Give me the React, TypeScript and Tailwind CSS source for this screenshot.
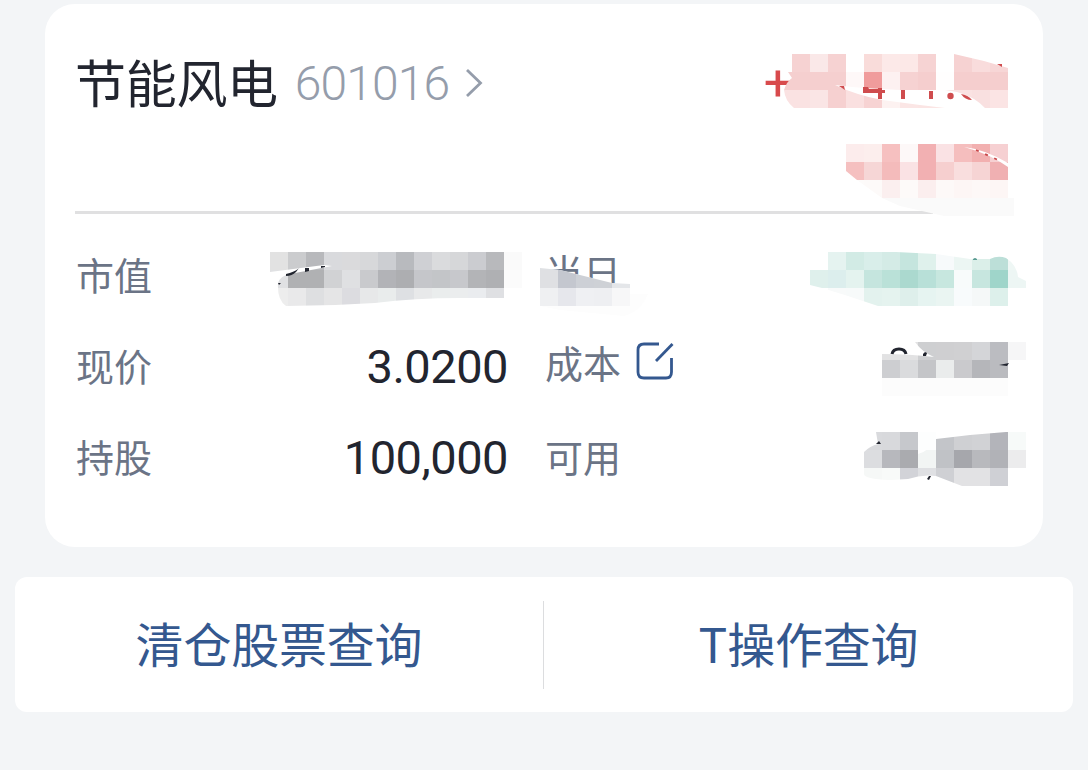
import React from "react";
import clsx from "clsx";

const CELL = 18;

type MosaicProps = {
  id: string;
  x: number;
  y: number;
  clip: string;
  rows: string[];
};

// A block of censored cells, each row is a space separated list of hex colours
const Mosaic = ({ id, x, y, clip, rows }: MosaicProps) => (
  <g>
    <clipPath id={id}>
      <path d={clip} />
    </clipPath>
    <g clipPath={`url(#${id})`} shapeRendering="crispEdges">
      {rows.map((row, r) =>
        row
          .split(" ")
          .map((color, c) =>
            color === "-" ? null : (
              <rect
                key={`${r}-${c}`}
                x={x + c * CELL}
                y={y + r * CELL}
                width={CELL}
                height={CELL}
                fill={`#${color}`}
              />
            )
          )
      )}
    </g>
  </g>
);

const Redactions = () => (
  <svg
    className="pointer-events-none absolute left-0 top-0"
    width="1088"
    height="770"
    viewBox="0 0 1088 770"
    fill="none"
  >
    {/* profit */}
    <Mosaic
      id="profit"
      x={774}
      y={54}
      clip="M792 54H954L984 61L1008 68V108H794Q785 101 784 90Q787 81 792 78L788 72H792Z"
      rows={[
        "- f6d2d2 fae8e8 f6d2d2 ffffff f9dcda fce9e8 fce8e7 f6d3d3 ffffff f6d2d2 f9dcdc f7d6d6",
        "f5cfcf f5cfcf f5cfcf f5cfcf fef8f8 f09c9c fdf1f1 f6d2d2 f5cece fffefe f5cece f5cece f5cece",
        "fae2e2 fae2e2 fae5e5 f6d0d0 fae0e0 f7d3d3 fdf2f1 fbe6e5 fbe5e4 fbe6e5 fae2e2 f9e0e0 fbe4e4",
      ]}
    />
    <path
      d="M835 85Q850 87 864 88L900 90H945L957 92Q975 97 985 108H945L920 105L882 100Q856 95 835 85Z"
      fill="#fff"
    />
    <g fill="#cf4c4e">
      <path d="M839 86h5l1 4Z" />
      <path d="M863 87h5l1 2h9v-1h4v2h3v3h-3v6h-4v-6h-15Z" />
      <path d="M901 90h4v9h-4Z" />
      <path d="M929 91h4v8h-4Z" />
      <circle cx="950.5" cy="96" r="3.2" />
      <path d="M961 94Q968 95 972 100Q965 100 961 94Z" />
      <path d="M997 64h5v3Z" />
    </g>

    {/* profit rate */}
    <Mosaic
      id="rate"
      x={846}
      y={144}
      clip="M846 144H1008V198H882L857 180L846 171Z"
      rows={[
        "fcecec fceeed f6c0c0 fdf8f8 f2b0b2 fae2e4 f5bebe f2b0b0 f6d0d2",
        "f5c0c0 f6d6d6 f4bbbb fae2e4 f2b0b2 f6cfcf f9dede f6d4d4 f0b0b2",
        "fdfbfa fdfaf9 fbefef fdfaf9 fbeeee fdf9f8 fdf6f5 fdf8f7 fdf6f5",
      ]}
    />
    <path d="M932 198H1014V216H944L900 206L882 198Z" fill="#fafafa" />
    <path d="M964 147Q984 149 1008 163V167Q990 154 964 147Z" fill="#fff" />
    <path
      d="M976 150L998 160"
      stroke="#c9484b"
      strokeWidth="1.8"
      strokeDasharray="3 7"
    />

    {/* market value */}
    <Mosaic
      id="market"
      x={270}
      y={252}
      clip="M270 252H522V298H460Q415 298 375 303Q330 306 286 306Q277 300 278 283Q280 276 290 274L332 266L324 265L270 272Z"
      rows={[
        "e2e2e2 cbccce b8b9bc d9dadd dadadc d7d8da ccced2 b8babe cfd0d4 dadbdd d6d7d9 cbccd0 b8b9bc fafafa",
        "e0e1e3 b0b1b3 b0b1b3 d1d2d4 dfe0e2 c9cacd b2b3b7 adaeb1 c5c6ca c3c5c8 c7c8cc b3b4b7 afb0b3 fbfbfb",
        "ededed e9e9ea dedfe1 e5e5e6 dcdce0 e7e8e9 e9ecec dee0e3 e8e9ea eaeded ebedee eaecef dfe0e3 ffffff",
      ]}
    />
    <g fill="#22252f">
      <path d="M286 274Q294 272 298 269L299 268L296 272Q292 276 286 276Z" />
      <path d="M305 268h4v3l-4 1Z" />
      <path d="M321 266h4v1l-4 1Z" />
      <path d="M278 283h3l-2 2Z" />
    </g>

    {/* today */}
    <path d="M540 268L560 270L612 283L630 284V306H540Z" fill="#fff" />
    <Mosaic
      id="today"
      x={540}
      y={252}
      clip="M540 268L560 270L612 283L630 284V306H540Z"
      rows={[
        "dfe1e4 d6d8dc - - -",
        "dfe0e3 c4c7cf cdd0d6 ced1d6 e4e6e9",
        "eff0f2 e6e7ec eff0f3 eeeff2 f7f7f8",
      ]}
    />
    <path d="M540 306H630V294H648Q640 312 624 316L560 310Z" fill="#fdfdfd" />

    {/* today profit */}
    <Mosaic
      id="todayProfit"
      x={810}
      y={252}
      clip="M828 252H896L936 254L970 259H990Q998 255 1006 258Q1017 265 1018 277L1026 281V288H1008V306H878L848 296L822 288L810 285V270H828Z"
      rows={[
        "- e5f3f0 d2ebe5 d9eeea d4ebe6 c5e5de dff1ec f7fafb ecf6f3 dbefe9 bcdfd8 eff7f5",
        "dff0ec dceeed e4f3ef c5e5de bae1d8 abd9cf b8e0d8 c7e7df f8fbfb c7e6df 9fd5ca edf6f4",
        "ffffff f8fafa f7fafa e3f2ee e5f3ef deefeb e6f4f1 eaf5f2 f8fbfc f5f8f8 ddf0eb ffffff",
      ]}
    />
    <path d="M973 259.5Q975 257.5 977 259.5Z" fill="#5b9c93" stroke="#5b9c93" />

    {/* cost price */}
    <Mosaic
      id="cost"
      x={882}
      y={342}
      clip="M915 342H1026V360H1008V378H882V354Q910 354 934 357Q922 352 915 342Z"
      rows={[
        "e2e2e3 e2e2e3 cecfd1 cfcfd1 d0d0d2 d4d5d8 bbbcc1 f6f6f7",
        "cdced1 dadbdd c4c5c8 eaecec cacacd b5b6ba babbbf fefefe",
      ]}
    />
    <path d="M892 354Q893 349 899 349Q905 349 906 354" stroke="#22252f" strokeWidth="3" />
    <path d="M923 354L925 352L927 353L926 356H923Z" fill="#22252f" />
    <path d="M999 365L1009 363L1007 366Z" fill="#22252f" />
    <path d="M882 378H1008V396H882Z" fill="#fcfcfc" />

    {/* available */}
    <Mosaic
      id="available"
      x={864}
      y={432}
      clip="M876 432H918V454Q928 452 936 439L970 435L1006 432H1026V468H1008V486H962L936 476Q922 474 908 479L890 480Q864 479 864 474V452Q870 446 878 444Z"
      rows={[
        "d9dadd d8d9dc c6c8cc fafbfb c3c5c9 cfd0d3 d1d2d5 b3b4ba f7faf9",
        "dcdde0 b7b8bd aaabaf f2f5f4 c0c2c6 a6a7ac b8b9bd b1b2b7 ececed",
        "f6f8f7 f8faf9 d2d3d8 dfe0e3 cfd0d4 e2e2e4 e2e2e4 cfd0d5 ffffff",
      ]}
    />
    <path d="M918 432H936V450H918Z" fill="#fdfefe" />
    <path d="M876 444L879 441L881 444Z" fill="#22252f" />
    <path d="M927 479L929 476H931L929 480Z" fill="#22252f" />
  </svg>
);

const EditIcon = () => (
  <svg width="38" height="38" viewBox="0 0 38 38" fill="none" stroke="#34588f" strokeWidth="2.8">
    <path d="M23 2H8Q2 2 2 8V30Q2 36 8 36H30Q35.5 36 35.5 30V16" />
    <path d="M20 19L36.5 2" />
  </svg>
);

type FieldProps = {
  label: string;
  value?: string;
  raised?: boolean;
  children?: React.ReactNode;
};

const Field = ({ label, value, raised, children }: FieldProps) => (
  <div className={clsx("flex items-center", raised && "pb-[7px]")}>
    <span className="text-[38px] text-[#6b7486]">{label}</span>
    {children}
    {value && (
      <span className="ml-auto pt-[5px] font-[Roboto] text-[47px] tracking-[-0.5px] text-[#22252f]">
        {value}
      </span>
    )}
  </div>
);

const HoldingCard = () => (
  <section className="mx-[45px] h-[543px] rounded-[30px] bg-white pl-[30px] pr-[32px]">
    <div className="flex h-[207px] items-start justify-between pt-[42px]">
      <div className="flex h-[74px] items-center">
        <h1 className="pb-[5px] text-[51px] font-normal leading-[74px] tracking-[-0.3px] text-[#22252f]">
          节能风电
        </h1>
        <span className="ml-[17px] pt-px font-[Roboto] text-[48px] font-[350] leading-[74px] tracking-[-0.9px] text-[#959dab]">
          601016
        </span>
        <svg className="ml-[16px]" width="18" height="30" viewBox="0 0 18 30" fill="none">
          <path d="M2 2L15.5 15L2 28" stroke="#959dab" strokeWidth="2.8" />
        </svg>
      </div>
      <span className="mr-[219px] font-[Roboto] text-[50px] font-normal leading-[74px] text-[#d84a4c]">
        +
      </span>
    </div>
    <div className="mr-[78px] h-[3px] bg-[#e0e0e1]" />
    <div className="grid h-[287px] w-[938px] grid-cols-[432px_1fr] grid-rows-3 gap-x-[37px] pl-px pt-[14px]">
      <Field label="市值" />
      <Field label="当日" raised />
      <Field label="现价" value="3.0200" />
      <Field label="成本" raised>
        <div className="ml-[15px]">
          <EditIcon />
        </div>
      </Field>
      <Field label="持股" value="100,000" />
      <Field label="可用" />
    </div>
  </section>
);

const ActionBar = () => (
  <section className="mx-[15px] mt-[30px] flex h-[135px] items-center rounded-xl bg-white text-[48px] tracking-[-0.2px] text-[#34588f]">
    <button className="w-[528px] pb-[5px]">清仓股票查询</button>
    <div className="h-[88px] w-px bg-[#dcdddf]" />
    <button className="flex-1 pb-[5px]">T操作查询</button>
  </section>
);

const App = () => {
  return (
    <main className="relative h-[770px] w-[1088px] overflow-hidden bg-[#f3f5f7] pt-1 font-['Noto_Sans_CJK_SC',sans-serif]">
      <HoldingCard />
      <ActionBar />
      <Redactions />
    </main>
  );
};

export default App;
